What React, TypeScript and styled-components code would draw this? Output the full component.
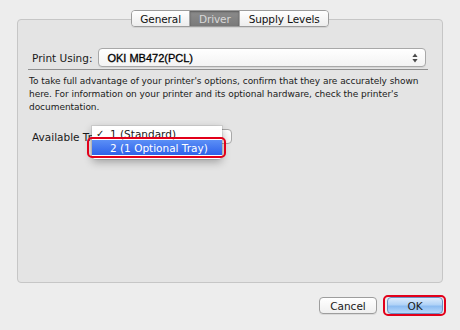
import React from "react";
import styled, { createGlobalStyle, css } from "styled-components";

const Global = createGlobalStyle`
	html, body {
		margin: 0;
		padding: 0;
		background: #ededed;
	}
	* {
		box-sizing: border-box;
	}
`;

const marked = css`
	&::after {
		content: "";
		position: absolute;
		top: -3px;
		bottom: -3px;
		left: -5px;
		right: -4px;
		border: 2px solid #e2001a;
		border-radius: 5px;
		pointer-events: none;
	}
`;

function Arrows() {
	return (
		<svg width="6" height="10" viewBox="0 0 6 10">
			<path d="M3 0.5 L5.6 4 L0.4 4 Z" fill="#4a4a4a" />
			<path d="M3 9.5 L5.6 6 L0.4 6 Z" fill="#4a4a4a" />
		</svg>
	);
}

function App() {
	return (
		<Window>
			<Global />
			<Tabs>
				<Tab>General</Tab>
				<Tab $active>Driver</Tab>
				<Tab>Supply Levels</Tab>
			</Tabs>
			<Panel>
				<PrintRow>
					<Label>Print Using:</Label>
					<Select>
						<SelectText>OKI MB472(PCL)</SelectText>
						<Arrows />
					</Select>
				</PrintRow>
				<Description>
					To take full advantage of your printer's options, confirm that they are accurately shown
					here. For information on your printer and its optional hardware, check the printer's
					documentation.
				</Description>
				<TrayRow>
					<TrayLabel>Available Trays:</TrayLabel>
					<TrayButton />
					<Menu>
						<MenuItem>
							<Check>✓</Check>1 (Standard)
						</MenuItem>
						<MenuItem $selected $marked>
							<Check />2 (1 Optional Tray)
						</MenuItem>
					</Menu>
				</TrayRow>
			</Panel>
			<Footer>
				<Button>Cancel</Button>
				<Button $primary $marked>
					OK
				</Button>
			</Footer>
		</Window>
	);
}

export default App;

const Window = styled.div`
	width: 460px;
	height: 330px;
	display: flex;
	flex-direction: column;
	padding: 10px 17px 0;
	font-family: "DejaVu Sans", "Liberation Sans", sans-serif;
	color: #1a1a1a;
`;

const Tabs = styled.div`
	align-self: center;
	display: flex;
	height: 17px;
	margin-bottom: -8px;
	position: relative;
	z-index: 1;
	border: 1px solid #9c9c9c;
	border-radius: 4px;
	overflow: hidden;
	box-shadow: 0 1px 0 rgba(0, 0, 0, 0.08);
`;

const Tab = styled.div<{ $active?: boolean }>`
	display: flex;
	align-items: center;
	padding: 0 8.5px;
	font-size: 10.5px;
	letter-spacing: -0.1px;
	background: linear-gradient(#ffffff, #ededed);
	color: #111;

	& + & {
		border-left: 1px solid #a6a6a6;
	}

	${(p) =>
		p.$active &&
		css`
			background: linear-gradient(#8c8c8c, #7a7a7a);
			color: #d9d9d9;
			box-shadow: inset 0 1px 2px rgba(0, 0, 0, 0.35);
		`}
`;

const Panel = styled.div`
	height: 264px;
	border: 1px solid #c6c6c6;
	border-radius: 4px;
	background: #e4e4e4;
	padding-top: 28px;
`;

const PrintRow = styled.div`
	display: flex;
	align-items: center;
	gap: 6px;
	margin: 0 14px 0 10px;
	padding: 0 2px 2px 4px;
	border-bottom: 1px solid #8f8f8f;
`;

const Label = styled.span`
	font-size: 10.5px;
	white-space: nowrap;
`;

const TrayLabel = styled(Label)`
	width: 60px;
	flex-shrink: 0;
	overflow: hidden;
`;

const Select = styled.div`
	flex: 1;
	height: 19px;
	display: flex;
	align-items: center;
	justify-content: space-between;
	padding: 0 7px 0 8px;
	border: 1px solid #a8a8a8;
	border-radius: 4px;
	background: linear-gradient(#ffffff, #f3f3f3);
	box-shadow: 0 1px 0 rgba(0, 0, 0, 0.06);
`;

const SelectText = styled.span`
	font-family: "Liberation Sans", "DejaVu Sans", sans-serif;
	font-size: 11px;
	color: #000;
	-webkit-text-stroke: 0.3px #000;
`;

const Description = styled.p`
	margin: 5px 10px 0 11px;
	font-size: 9px;
	line-height: 13px;
	letter-spacing: -0.05px;
`;

const TrayRow = styled.div`
	position: relative;
	display: flex;
	align-items: center;
	margin: 14px 0 0 14px;
	height: 17px;
`;

const TrayButton = styled.div`
	width: 140px;
	height: 15px;
	margin-left: 0;
	border: 1px solid #a8a8a8;
	border-radius: 4px;
	background: linear-gradient(#ffffff, #f3f3f3);
`;

const Menu = styled.div`
	position: absolute;
	left: 60px;
	top: -2px;
	width: 130px;
	padding: 0 0 4px;
	background: rgba(255, 255, 255, 0.98);
	border-radius: 0 0 4px 4px;
	box-shadow: 0 3px 8px rgba(0, 0, 0, 0.3), 0 0 0 1px rgba(0, 0, 0, 0.08);
`;

const MenuItem = styled.div<{ $selected?: boolean; $marked?: boolean }>`
	position: relative;
	display: flex;
	align-items: center;
	height: 15px;
	font-size: 10.5px;
	color: #1a1a1a;

	&:first-child {
		height: 14px;
		align-items: flex-end;
		line-height: 12px;
	}

	${(p) =>
		p.$selected &&
		css`
			background: linear-gradient(#5b8ff6, #2e62ea);
			color: #ffffff;
		`}
	${(p) => p.$marked && marked}
`;

const Check = styled.span`
	display: inline-block;
	width: 18px;
	padding-left: 4px;
	font-size: 10px;
`;

const Footer = styled.div`
	display: flex;
	justify-content: flex-end;
	gap: 10px;
	margin-top: 14px;
`;

const Button = styled.div<{ $primary?: boolean; $marked?: boolean }>`
	position: relative;
	display: flex;
	align-items: center;
	justify-content: center;
	height: 17px;
	width: ${(p) => (p.$primary ? "56px" : "58px")};
	font-size: 10.5px;
	border: 1px solid #9d9d9d;
	border-radius: 4px;
	background: linear-gradient(#ffffff, #efefef);
	box-shadow: 0 1px 0 rgba(0, 0, 0, 0.08);

	${(p) =>
		p.$primary &&
		css`
			border-color: #6b8fc4;
			background: linear-gradient(#dcebfc 0%, #b1d3f7 45%, #8cbcf1 55%, #b7d9fb 100%);
		`}
	${(p) => p.$marked && marked}
`;
